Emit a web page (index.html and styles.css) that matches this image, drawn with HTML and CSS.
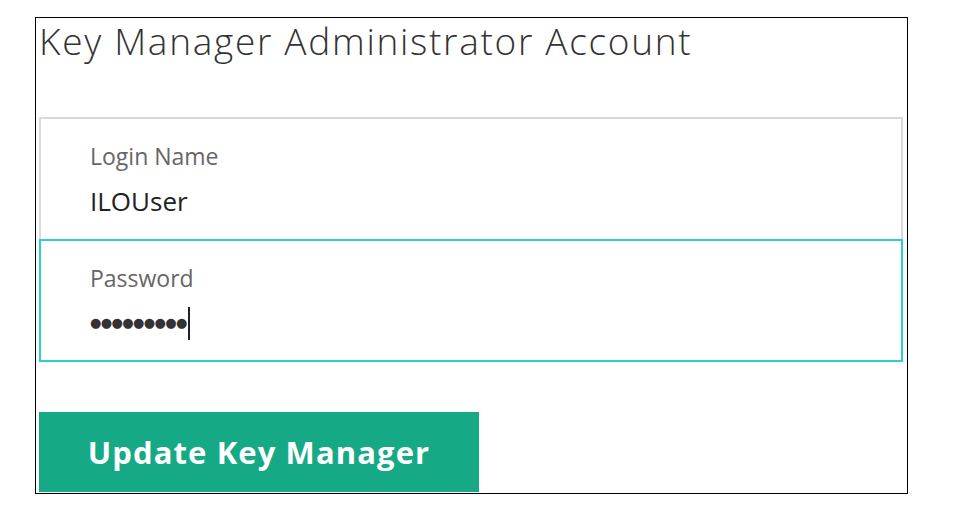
FILE: index.html
```html
<!DOCTYPE html>
<html>
<head>
<meta charset="utf-8">
<link rel="stylesheet" href="styles.css">
</head>
<body>
<div class="frame">
  <h1 class="title">Key Manager Administrator Account</h1>
  <div class="fields">
    <div class="field">
      <div class="label">Login Name</div>
      <div class="value">ILOUser</div>
    </div>
    <div class="field field-focus">
      <div class="label">Password</div>
      <div class="value pw"><span class="dots">●●●●●●●●●</span><span class="caret"></span></div>
    </div>
  </div>
  <button class="btn">Update Key Manager</button>
</div>
</body>
</html>
```

FILE: styles.css
```css
html, body {
  margin: 0;
  padding: 0;
  background: #fff;
}
body {
  font-family: "Open Sans", "Liberation Sans", sans-serif;
}
.frame {
  margin: 17px 0 0 35px;
  width: 868px;
  height: 475px;
  border: 1px solid #000;
  padding-left: 3px;
  display: flex;
  flex-direction: column;
}
.title {
  margin: 0;
  font-family: "Open Sans", sans-serif;
  font-weight: 300;
  font-size: 37px;
  line-height: 46px;
  letter-spacing: 1.7px;
  color: #333;
  height: 99px;
}
.fields {
  width: 864px;
}
.field {
  box-sizing: border-box;
  height: 124px;
  border: 2px solid #d9d9d9;
  padding: 22px 0 0 49px;
}
.field-focus {
  margin-top: -2px;
  height: 123px;
  border-color: #2ad2c9;
}
.label {
  font-size: 23px;
  line-height: 30px;
  color: #666;
}
.value {
  margin-top: 13px;
  font-size: 26px;
  line-height: 34px;
  color: #222;
  display: flex;
  align-items: center;
}
.dots {
  font-family: "DejaVu Sans", sans-serif;
  font-size: 13px;
  letter-spacing: -0.6px;
  color: #333;
}
.caret {
  width: 2px;
  height: 33px;
  background: #222;
  margin-left: 1px;
}
.btn {
  margin-top: 50px;
  width: 440px;
  height: 80px;
  border: none;
  background: #16a985;
  color: #fff;
  font-family: "Open Sans", sans-serif;
  font-weight: 700;
  font-size: 31px;
  letter-spacing: 1.1px;
  padding: 0;
  text-align: center;
}
```
